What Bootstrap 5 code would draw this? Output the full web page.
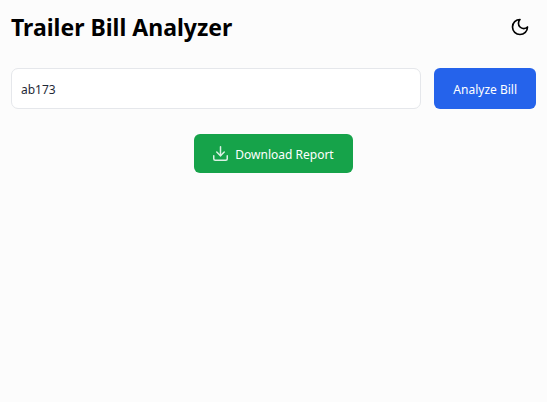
<!DOCTYPE html>
<html lang="en">
<head>
<meta charset="utf-8">
<meta name="viewport" content="width=device-width, initial-scale=1">
<title>Trailer Bill Analyzer</title>
<link href="https://cdn.jsdelivr.net/npm/bootstrap@5.3.0/dist/css/bootstrap.min.css" rel="stylesheet">
<style>
  body {
    background: #fcfcfc;
    color: #000;
    font-family: "Segoe UI", "Noto Sans", "Open Sans", sans-serif;
    font-size: 12px;
  }
  .page { padding: 8px 11px; }
  .page-title { font-size: 23px; line-height: 38px; }
  .theme-toggle { padding: 8px 6px; color: #000; line-height: 1; }
  .bill-form { gap: 13px; margin: 22px 0 25px; }
  .bill-input {
    height: 41px;
    padding: 2px 9px 0;
    border: 1px solid #e5e7eb;
    border-radius: 7px;
    color: #1f2937;
    font-size: 12px;
  }
  .btn-action {
    --bs-btn-color: #fff;
    --bs-btn-hover-color: #fff;
    --bs-btn-font-size: 12px;
    --bs-btn-border-width: 0;
    --bs-btn-border-radius: 6px;
    --bs-btn-padding-x: 19px;
    line-height: 19px;
  }
  .btn-analyze { --bs-btn-bg: #2563eb; --bs-btn-hover-bg: #1d4ed8; padding-top: 8px; }
  .btn-download {
    --bs-btn-bg: #16a34a;
    --bs-btn-hover-bg: #15803d;
    padding-top: 11px;
    padding-bottom: 9px;
    gap: 7px;
  }
  .btn-download svg { margin-bottom: 3px; opacity: .85; }
</style>
</head>
<body>
<main class="page container-fluid">
  <header class="d-flex justify-content-between align-items-center">
    <h1 class="page-title fw-bold mb-0">Trailer Bill Analyzer</h1>
    <button type="button" class="theme-toggle btn border-0" aria-label="Switch to dark mode">
      <svg class="d-block" width="20" height="20" viewBox="0 0 24 24" fill="none" stroke="currentColor" stroke-width="2" stroke-linecap="round" stroke-linejoin="round" aria-hidden="true"><path d="M12 3a6 6 0 0 0 9 9 9 9 0 1 1-9-9Z"/></svg>
    </button>
  </header>
  <form class="bill-form d-flex">
    <input id="bill" type="text" class="bill-input form-control flex-grow-1" value="ab173" aria-label="Bill number">
    <button type="button" class="btn btn-action btn-analyze text-nowrap">Analyze Bill</button>
  </form>
  <div class="d-flex justify-content-center">
    <button type="button" class="btn btn-action btn-download d-inline-flex align-items-center">
      <svg width="15" height="15" viewBox="2 2 20 20" fill="none" stroke="currentColor" stroke-width="2" stroke-linecap="round" stroke-linejoin="round" aria-hidden="true"><path d="M21 15v4a2 2 0 0 1-2 2H5a2 2 0 0 1-2-2v-4"/><path d="m7 10 5 5 5-5"/><path d="M12 15V3"/></svg>
      Download Report
    </button>
  </div>
</main>
<script src="https://cdn.jsdelivr.net/npm/bootstrap@5.3.0/dist/js/bootstrap.bundle.min.js"></script>
</body>
</html>
